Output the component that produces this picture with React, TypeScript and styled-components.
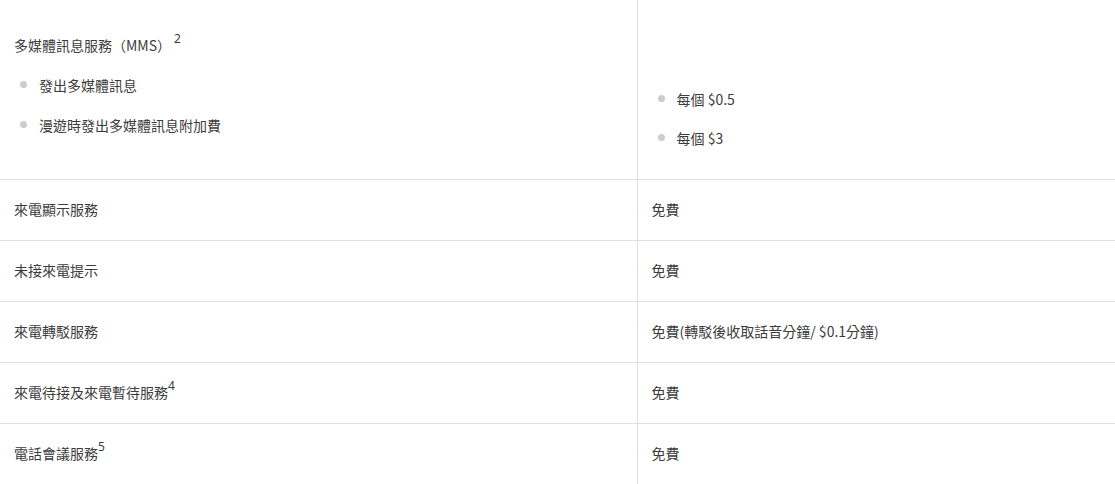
import React from "react";
import styled, { createGlobalStyle } from "styled-components";

const GlobalStyle = createGlobalStyle`
  html, body {
    margin: 0;
    padding: 0;
    background: #fff;
  }
  body {
    font-family: "Noto Sans CJK TC", "Noto Sans", sans-serif;
    color: #3c3c3c;
  }
`;

interface FeeRow {
  name: string;
  note?: string;
  fee: string;
}

const rows: FeeRow[] = [
  { name: "來電顯示服務", fee: "免費" },
  { name: "未接來電提示", fee: "免費" },
  { name: "來電轉駁服務", fee: "免費(轉駁後收取話音分鐘/ $0.1分鐘)" },
  { name: "來電待接及來電暫待服務", note: "4", fee: "免費" },
  { name: "電話會議服務", note: "5", fee: "免費" },
];

export default function App() {
  return (
    <>
      <GlobalStyle />
      <Table>
        <colgroup>
          <col style={{ width: 637 }} />
          <col />
        </colgroup>
        <tbody>
          <Row>
            <Cell $top>
              <Title>
                多媒體訊息服務（MMS）<Note $gap>2</Note>
              </Title>
              <Bullets>
                <Bullet>發出多媒體訊息</Bullet>
                <Bullet>漫遊時發出多媒體訊息附加費</Bullet>
              </Bullets>
            </Cell>
            <Cell $top $right>
              <Bullets $offset>
                <Bullet>每個 $0.5</Bullet>
                <Bullet>每個 $3</Bullet>
              </Bullets>
            </Cell>
          </Row>
          {rows.map((row) => (
            <Row key={row.name}>
              <Cell>
                {row.name}
                {row.note && <Note>{row.note}</Note>}
              </Cell>
              <Cell $right>{row.fee}</Cell>
            </Row>
          ))}
        </tbody>
      </Table>
    </>
  );
}

const Table = styled.table`
  width: 1115px;
  border-collapse: collapse;
  table-layout: fixed;
  font-size: 14px;
  line-height: 20px;
`;

const Row = styled.tr`
  height: 61px;
  border-bottom: 1px solid #dedede;

  &:first-child {
    height: 179px;
  }

  &:last-child {
    border-bottom: none;
  }
`;

const Cell = styled.td<{ $top?: boolean; $right?: boolean }>`
  padding: ${(p) => (p.$top ? "35px 14px 20px" : "0 14px 2px")};
  vertical-align: ${(p) => (p.$top ? "top" : "middle")};
  border-left: ${(p) => (p.$right ? "1px solid #dedede" : "none")};
`;

const Title = styled.div`
  height: 20px;
`;

const Note = styled.sup<{ $gap?: boolean }>`
  font-size: 12px;
  line-height: 0;
  position: relative;
  top: -2px;
  margin-left: ${(p) => (p.$gap ? "3px" : "0")};
  font-family: "Noto Sans", sans-serif;
`;

const Bullets = styled.ul<{ $offset?: boolean }>`
  list-style: none;
  margin: ${(p) => (p.$offset ? "54px 0 0" : "20px 0 0")};
  padding: 0;
  display: flex;
  flex-direction: column;
  gap: ${(p) => (p.$offset ? "19px" : "20px")};
`;

const Bullet = styled.li`
  position: relative;
  padding-left: 25px;
  height: 20px;

  &::before {
    content: "";
    position: absolute;
    left: 6px;
    top: 6px;
    width: 7px;
    height: 7px;
    border-radius: 50%;
    background: #cccccc;
  }
`;
